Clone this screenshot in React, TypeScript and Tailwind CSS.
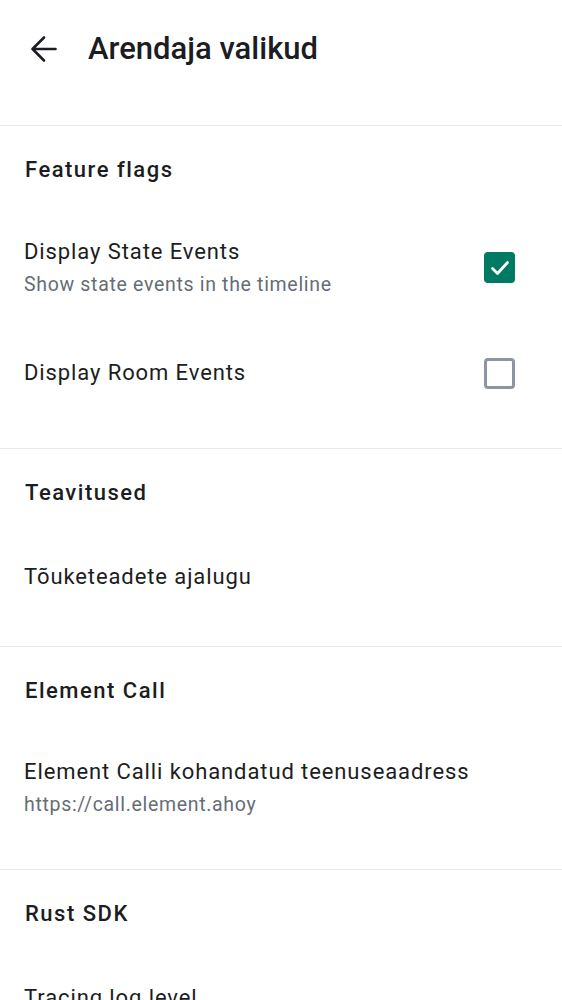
import React from 'react';

type Item = {
  title: string;
  subtitle?: string;
  checkbox?: 'on' | 'off';
  h: string;
};

type Section = {
  header: string;
  pad: string;
  items: Item[];
};

const sections: Section[] = [
  {
    header: 'Feature flags',
    pad: 'pb-[25px]',
    items: [
      { title: 'Display State Events', subtitle: 'Show state events in the timeline', checkbox: 'on', h: 'h-[111px]' },
      { title: 'Display Room Events', checkbox: 'off', h: 'h-[100px]' },
    ],
  },
  {
    header: 'Teavitused',
    pad: 'pb-[27px]',
    items: [{ title: 'Tõuketeadete ajalugu', h: 'h-[84px]' }],
  },
  {
    header: 'Element Call',
    pad: 'pb-[27px]',
    items: [{ title: 'Element Calli kohandatud teenuseaadress', subtitle: 'https://call.element.ahoy', h: 'h-[109px]' }],
  },
  {
    header: 'Rust SDK',
    pad: 'pb-[27px]',
    items: [{ title: 'Tracing log level', h: 'h-[84px]' }],
  },
];

function Checkbox({ checked }: { checked: boolean }) {
  if (checked) {
    return (
      <div className="w-[31px] h-[31px] rounded-[4px] bg-[#007a62] flex items-center justify-center">
        <svg width="22" height="22" viewBox="0 0 22 22" fill="none">
          <path d="M3.5 11.5 8.5 16.5 18.5 5.5" stroke="white" strokeWidth="2.8" strokeLinecap="round" strokeLinejoin="round" />
        </svg>
      </div>
    );
  }
  return <div className="w-[31px] h-[31px] rounded-[4px] border-[3px] border-[#8d95a1]" />;
}

function Row({ item }: { item: Item }) {
  return (
    <div className={`${item.h} flex items-center pl-[24px] pr-[47px]`}>
      <div className="flex-1 flex flex-col">
        <span className="text-[22px] leading-[34px] tracking-[0.9px] text-[#1b1d22] whitespace-nowrap">{item.title}</span>
        {item.subtitle && (
          <span className="text-[19.5px] leading-[32px] tracking-[0.68px] text-[#656d77] whitespace-nowrap">{item.subtitle}</span>
        )}
      </div>
      {item.checkbox && <Checkbox checked={item.checkbox === 'on'} />}
    </div>
  );
}

export default function App() {
  return (
    <div className="w-[562px] h-[1000px] overflow-hidden bg-white" style={{ fontFamily: 'Roboto, "Noto Sans", sans-serif' }}>
      <div className="h-[125px] pb-[27px] flex items-center">
        <div className="w-[88px] flex justify-start pl-[28px]">
          <svg width="30" height="28" viewBox="0 0 30 28" fill="none">
            <path d="M4.5 14H27.5M16 2.5 4.5 14 16 25.5" stroke="#1b1d22" strokeWidth="2.6" strokeLinecap="round" strokeLinejoin="round" />
          </svg>
        </div>
        <h1 className="text-[31px] font-medium text-[#1b1d22]">Arendaja valikud</h1>
      </div>
      {sections.map(s => (
        <div key={s.header} className={s.pad}>
          <div className="h-px bg-[#e9e9eb]" />
          <div className="h-[86px] flex items-center pl-[25px]">
            <span className="text-[22px] font-medium tracking-[1.5px] text-[#1b1d22]">{s.header}</span>
          </div>
          {s.items.map(it => (
            <Row key={it.title} item={it} />
          ))}
        </div>
      ))}
    </div>
  );
}
